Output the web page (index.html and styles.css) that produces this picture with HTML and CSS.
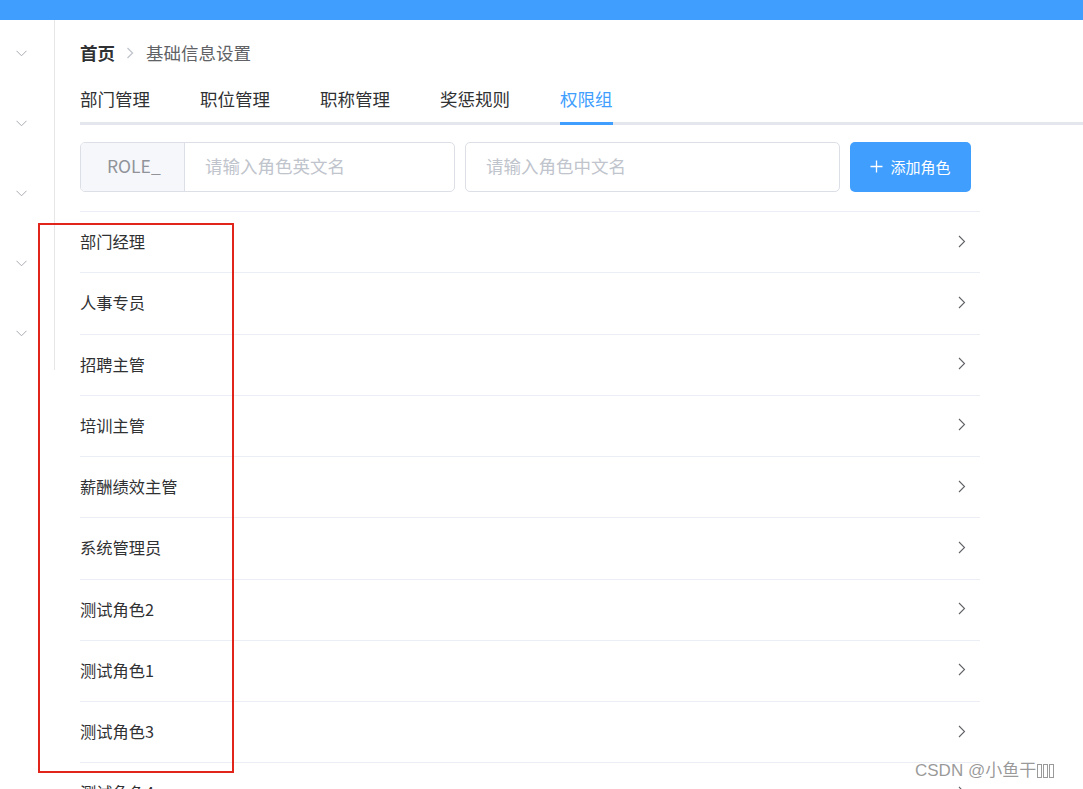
FILE: index.html
```html
<!DOCTYPE html>
<html lang="zh-CN">
<head>
<meta charset="utf-8">
<title>权限组</title>
<link rel="stylesheet" href="styles.css">
</head>
<body>
<div class="app">
  <header class="topbar"></header>
  <div class="body">
    <aside class="sidebar">
      <div class="side-item"><svg class="chev-down" width="11" height="7" viewBox="0 0 11 7"><path d="M0.5 0.8 L5.5 5.8 L10.5 0.8" fill="none" stroke="#a8abb2" stroke-width="1"/></svg></div>
      <div class="side-item"><svg class="chev-down" width="11" height="7" viewBox="0 0 11 7"><path d="M0.5 0.8 L5.5 5.8 L10.5 0.8" fill="none" stroke="#a8abb2" stroke-width="1"/></svg></div>
      <div class="side-item"><svg class="chev-down" width="11" height="7" viewBox="0 0 11 7"><path d="M0.5 0.8 L5.5 5.8 L10.5 0.8" fill="none" stroke="#a8abb2" stroke-width="1"/></svg></div>
      <div class="side-item"><svg class="chev-down" width="11" height="7" viewBox="0 0 11 7"><path d="M0.5 0.8 L5.5 5.8 L10.5 0.8" fill="none" stroke="#a8abb2" stroke-width="1"/></svg></div>
      <div class="side-item"><svg class="chev-down" width="11" height="7" viewBox="0 0 11 7"><path d="M0.5 0.8 L5.5 5.8 L10.5 0.8" fill="none" stroke="#a8abb2" stroke-width="1"/></svg></div>
    </aside>
    <main class="content">
      <nav class="breadcrumb">
        <span class="crumb-home">首页</span>
        <svg class="crumb-sep" width="8" height="12" viewBox="0 0 8 12"><path d="M1.5 1 L6.5 6 L1.5 11" fill="none" stroke="#c0c4cc" stroke-width="1.3"/></svg>
        <span class="crumb-cur">基础信息设置</span>
      </nav>
      <div class="tabs">
        <div class="tab">部门管理</div>
        <div class="tab">职位管理</div>
        <div class="tab">职称管理</div>
        <div class="tab">奖惩规则</div>
        <div class="tab active">权限组</div>
      </div>
      <div class="pane">
        <div class="form-row">
          <div class="input-group">
            <div class="prepend">ROLE_</div>
            <div class="input"><span class="placeholder">请输入角色英文名</span></div>
          </div>
          <div class="input single"><span class="placeholder">请输入角色中文名</span></div>
          <button class="btn-primary"><svg width="13" height="13" viewBox="0 0 13 13"><path d="M6.5 0.5 V12.5 M0.5 6.5 H12.5" stroke="#fff" stroke-width="1.3"/></svg><span>添加角色</span></button>
        </div>
        <ul class="role-list">
          <li class="role"><span>部门经理</span><svg class="chev-right" width="8" height="13" viewBox="0 0 8 13"><path d="M1 1 L6.5 6.5 L1 12" fill="none" stroke="#606266" stroke-width="1.1"/></svg></li>
          <li class="role"><span>人事专员</span><svg class="chev-right" width="8" height="13" viewBox="0 0 8 13"><path d="M1 1 L6.5 6.5 L1 12" fill="none" stroke="#606266" stroke-width="1.1"/></svg></li>
          <li class="role"><span>招聘主管</span><svg class="chev-right" width="8" height="13" viewBox="0 0 8 13"><path d="M1 1 L6.5 6.5 L1 12" fill="none" stroke="#606266" stroke-width="1.1"/></svg></li>
          <li class="role"><span>培训主管</span><svg class="chev-right" width="8" height="13" viewBox="0 0 8 13"><path d="M1 1 L6.5 6.5 L1 12" fill="none" stroke="#606266" stroke-width="1.1"/></svg></li>
          <li class="role"><span>薪酬绩效主管</span><svg class="chev-right" width="8" height="13" viewBox="0 0 8 13"><path d="M1 1 L6.5 6.5 L1 12" fill="none" stroke="#606266" stroke-width="1.1"/></svg></li>
          <li class="role"><span>系统管理员</span><svg class="chev-right" width="8" height="13" viewBox="0 0 8 13"><path d="M1 1 L6.5 6.5 L1 12" fill="none" stroke="#606266" stroke-width="1.1"/></svg></li>
          <li class="role"><span>测试角色2</span><svg class="chev-right" width="8" height="13" viewBox="0 0 8 13"><path d="M1 1 L6.5 6.5 L1 12" fill="none" stroke="#606266" stroke-width="1.1"/></svg></li>
          <li class="role"><span>测试角色1</span><svg class="chev-right" width="8" height="13" viewBox="0 0 8 13"><path d="M1 1 L6.5 6.5 L1 12" fill="none" stroke="#606266" stroke-width="1.1"/></svg></li>
          <li class="role"><span>测试角色3</span><svg class="chev-right" width="8" height="13" viewBox="0 0 8 13"><path d="M1 1 L6.5 6.5 L1 12" fill="none" stroke="#606266" stroke-width="1.1"/></svg></li>
          <li class="role"><span>测试角色4</span><svg class="chev-right" width="8" height="13" viewBox="0 0 8 13"><path d="M1 1 L6.5 6.5 L1 12" fill="none" stroke="#606266" stroke-width="1.1"/></svg></li>
        </ul>
      </div>
    </main>
  </div>
  <div class="highlight"></div>
  <div class="watermark">CSDN @小鱼干<span class="tofu"></span><span class="tofu"></span><span class="tofu"></span></div>
</div>
</body>
</html>
```
FILE: styles.css
```css
* { box-sizing: border-box; }
html, body { margin: 0; padding: 0; }
body {
  font-family: "Noto Sans CJK SC", "Noto Sans", sans-serif;
  color: #303133;
  background: #fff;
}
.app {
  position: relative;
  width: 100%;
  height: 789px;
  overflow: hidden;
}
.topbar {
  height: 20px;
  background: #409eff;
}
.body {
  display: flex;
  align-items: flex-start;
}
.sidebar {
  width: 55px;
  flex: none;
  border-right: 1px solid #e6e6e6;
  height: 350px;
}
.side-item {
  height: 70px;
  padding-top: 30px;
  padding-left: 16px;
}
.chev-down { display: block; }
.content {
  flex: 1;
  padding-left: 25px;
  padding-top: 21px;
}
.breadcrumb {
  display: flex;
  align-items: center;
  height: 24px;
  font-size: 17.5px;
  line-height: 24px;
}
.crumb-home { font-weight: 700; color: #303133; }
.crumb-sep { margin: 0 12px 0 11px; }
.crumb-cur { color: #606266; }
.tabs {
  display: flex;
  margin-top: 13px;
  border-bottom: 3px solid #e4e7ed;
  height: 47px;
}
.tab {
  height: 47px;
  line-height: 42px;
  padding: 0 25px;
  font-size: 17.5px;
  color: #303133;
}
.tab:first-child { padding-left: 0; }
.tab.active {
  color: #409eff;
  padding: 0;
  margin-left: 25px;
  border-bottom: 3px solid #409eff;
  height: 47px;
}
.pane { width: 900px; }
.form-row {
  display: flex;
  align-items: center;
  gap: 10px;
  margin-top: 17px;
  padding-bottom: 19px;
  border-bottom: 1px solid #ebeef5;
}
.input-group {
  display: flex;
  width: 375px;
  height: 50px;
  border: 1px solid #dcdfe6;
  border-radius: 5px;
  overflow: hidden;
}
.prepend {
  width: 104px;
  flex: none;
  background: #f5f7fa;
  border-right: 1px solid #dcdfe6;
  color: #909399;
  font-size: 17.5px;
  line-height: 46px;
  padding-left: 26px;
}
.input {
  flex: 1;
  display: flex;
  align-items: center;
  padding-left: 20px;
  padding-bottom: 3px;
  font-size: 17.5px;
}
.input.single {
  flex: none;
  width: 375px;
  height: 50px;
  border: 1px solid #dcdfe6;
  border-radius: 5px;
}
.placeholder { color: #c0c4cc; }
.btn-primary {
  width: 121px;
  height: 50px;
  border: none;
  border-radius: 5px;
  background: #409eff;
  color: #fff;
  font-family: inherit;
  font-size: 15px;
  display: flex;
  align-items: center;
  justify-content: center;
  gap: 7px;
  padding: 0 0 2px;
}
.role-list {
  list-style: none;
  margin: 0;
  padding: 0;
}
.role {
  height: 61.25px;
  border-bottom: 1px solid #ebeef5;
  display: flex;
  align-items: center;
  justify-content: space-between;
  font-size: 16.25px;
  color: #303133;
  padding-right: 14px;
  padding-bottom: 2px;
}
.chev-right { display: block; }
.highlight {
  position: absolute;
  left: 38px;
  top: 223px;
  width: 196px;
  height: 550px;
  border: 2px solid #e1251b;
  pointer-events: none;
}
.watermark {
  position: absolute;
  left: 915px;
  top: 759px;
  font-family: "Liberation Sans", "Noto Sans CJK SC", sans-serif;
  font-size: 17px;
  line-height: 24px;
  color: rgba(120, 120, 120, 0.75);
  display: flex;
  align-items: center;
}
.tofu {
  display: inline-block;
  width: 5px;
  height: 14px;
  border: 1px solid rgba(120, 120, 120, 0.75);
  margin-left: 1px;
}
```
